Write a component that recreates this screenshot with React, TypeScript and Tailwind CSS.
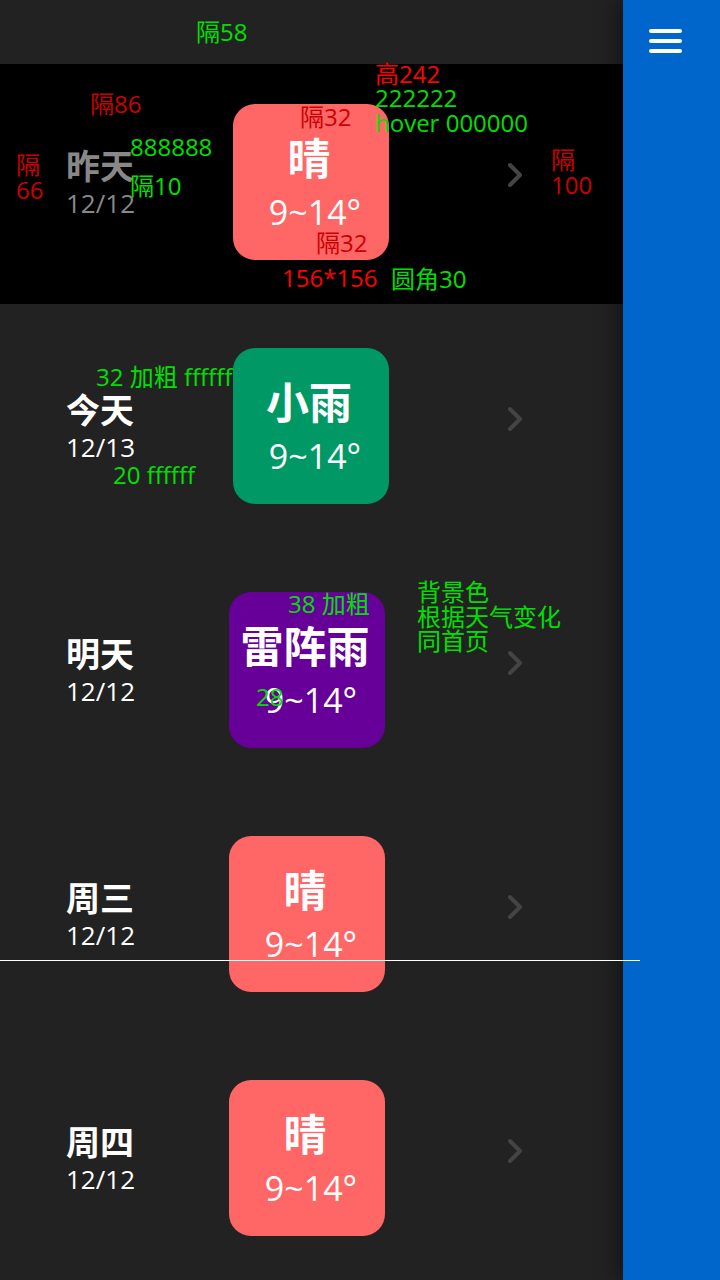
import React from "react";

type Day = {
  name: string;
  date: string;
  weather: string;
  color: string;
  labelW: string;
  rowCls: string;
  nameCls: string;
};

const days: Day[] = [
  { name: "昨天", date: "12/12", weather: "晴", color: "bg-[#ff6666]", labelW: "w-[167px]", rowCls: "h-[240px] bg-black pb-[4px]", nameCls: "text-[#888888]" },
  { name: "今天", date: "12/13", weather: "小雨", color: "bg-[#009966]", labelW: "w-[167px]", rowCls: "h-[244px]", nameCls: "text-white" },
  { name: "明天", date: "12/12", weather: "雷阵雨", color: "bg-[#660099]", labelW: "w-[163px]", rowCls: "h-[244px]", nameCls: "text-white" },
  { name: "周三", date: "12/12", weather: "晴", color: "bg-[#ff6666]", labelW: "w-[163px]", rowCls: "h-[244px]", nameCls: "text-white" },
  { name: "周四", date: "12/12", weather: "晴", color: "bg-[#ff6666]", labelW: "w-[163px]", rowCls: "h-[244px]", nameCls: "text-white" },
];

function Chevron() {
  return (
    <svg width="16" height="26" viewBox="0 0 16 26" className="mb-[15px]">
      <polyline points="3,3 13,13 3,23" fill="none" stroke="#444444" strokeWidth="4" strokeLinecap="round" strokeLinejoin="round" />
    </svg>
  );
}

function DayRow({ d }: { d: Day }) {
  return (
    <div className={`flex items-center pl-[66px] pr-[100px] ${d.rowCls}`}>
      <div className={`${d.labelW} flex flex-col ${d.nameCls}`}>
        <span className="text-[34px] font-bold leading-[40px]">{d.name}</span>
        <span className="mt-[2px] text-[26px] leading-[30px]">{d.date}</span>
      </div>
      <div className={`flex h-[156px] w-[156px] flex-col items-center justify-center rounded-[22px] text-white ${d.color}`}>
        <span className="mr-[4px] text-[43px] font-bold leading-[52px]">{d.weather}</span>
        <span className="ml-[8px] mt-[7px] text-[34px] leading-[40px]">9~14°</span>
      </div>
      <div className="ml-auto">
        <Chevron />
      </div>
    </div>
  );
}

function Note({ x, y, c, children }: { x: string; y: string; c: string; children: React.ReactNode }) {
  return <div className={`absolute whitespace-pre text-[24px] leading-[24.5px] ${x} ${y} ${c}`}>{children}</div>;
}

export default function App() {
  const g = "text-[#00e000]";
  const r = "text-[#ff0000]";
  const dr = "text-[#cc0000]";
  return (
    <div className="relative flex h-[1280px] w-[720px] overflow-hidden bg-[#222222] font-['Open_Sans','Noto_Sans_CJK_SC',sans-serif]">
      <div className="flex w-[623px] flex-col">
        <div className="h-[64px] bg-[#222222] shadow-[0_2px_3px_rgba(0,0,0,0.5)]" />
        {days.map((d) => (
          <DayRow key={d.name} d={d} />
        ))}
      </div>
      <div className="z-10 flex w-[97px] bg-[#0066cc] pl-[26px] pt-[29px] shadow-[-8px_0_20px_rgba(0,0,0,0.35)]">
        <div className="flex flex-col gap-[6px]">
          <div className="h-[4px] w-[33px] rounded-full bg-white" />
          <div className="h-[4px] w-[33px] rounded-full bg-white" />
          <div className="h-[4px] w-[33px] rounded-full bg-white" />
        </div>
      </div>

      <div className="absolute left-0 top-[960px] z-20 h-px w-[640px] bg-white" />

      <div className="pointer-events-none absolute inset-0 z-30">
        <Note x="left-[196px]" y="top-[20px]" c={g}>隔58</Note>
        <Note x="left-[375px]" y="top-[62px]" c={r}>高242</Note>
        <Note x="left-[375px]" y="top-[86px]" c={g}>222222</Note>
        <Note x="left-[375px]" y="top-[111px]" c={g}>hover 000000</Note>
        <Note x="left-[90px]" y="top-[92px]" c={dr}>隔86</Note>
        <Note x="left-[300px]" y="top-[105px]" c={dr}>隔32</Note>
        <Note x="left-[130px]" y="top-[135px]" c={g}>888888</Note>
        <Note x="left-[130px]" y="top-[174px]" c={g}>隔10</Note>
        <Note x="left-[16px]" y="top-[153px]" c={dr}>{"隔\n66"}</Note>
        <Note x="left-[551px]" y="top-[148px]" c={dr}>{"隔\n100"}</Note>
        <Note x="left-[316px]" y="top-[231px]" c={dr}>隔32</Note>
        <Note x="left-[282px]" y="top-[266px]" c={r}>156*156</Note>
        <Note x="left-[391px]" y="top-[267px]" c={g}>圆角30</Note>
        <Note x="left-[96px]" y="top-[365px]" c={g}>32 加粗 ffffff</Note>
        <Note x="left-[113px]" y="top-[463px]" c={g}>20 ffffff</Note>
        <Note x="left-[288px]" y="top-[592px]" c={g}>38 加粗</Note>
        <Note x="left-[417px]" y="top-[580px]" c={g}>{"背景色\n根据天气变化\n同首页"}</Note>
        <Note x="left-[256px]" y="top-[685px]" c={g}>28</Note>
      </div>
    </div>
  );
}
